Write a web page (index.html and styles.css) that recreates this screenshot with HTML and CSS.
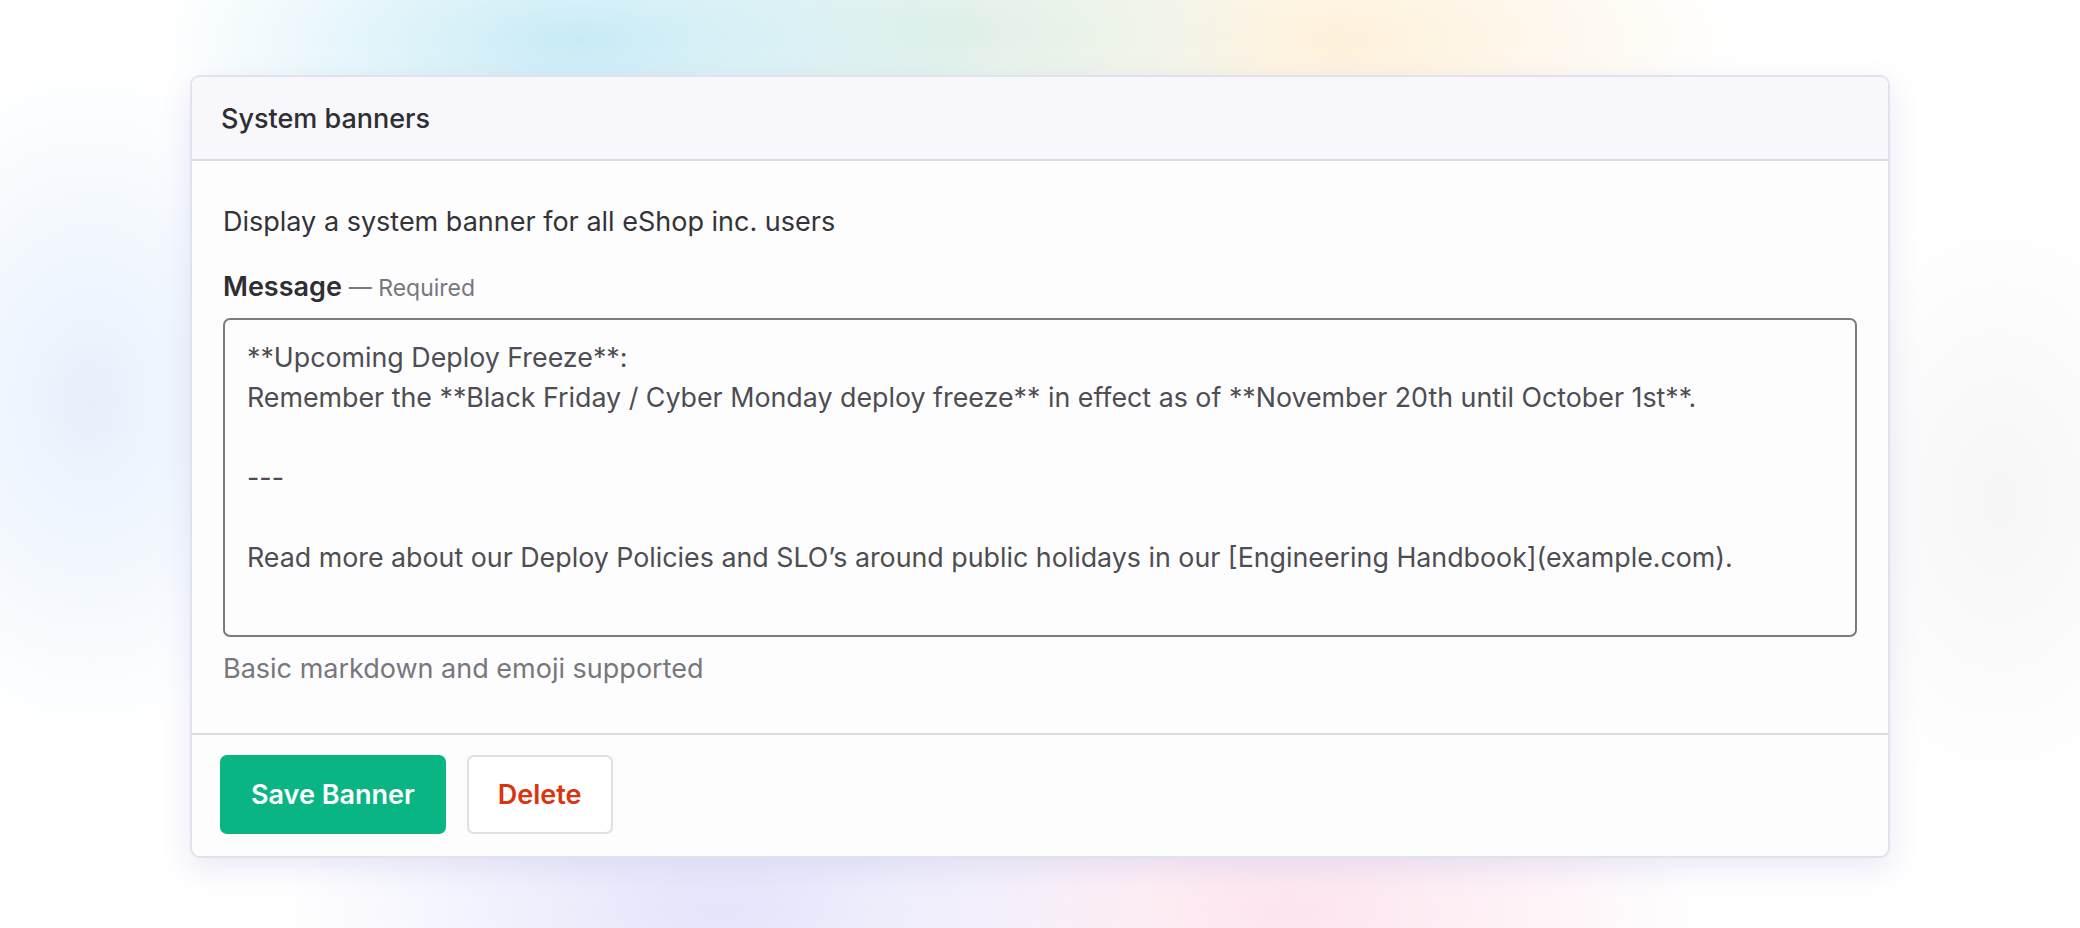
FILE: index.html
```html
<!DOCTYPE html>
<html lang="en">

<head>
  <meta charset="UTF-8">
  <meta name="viewport" content="width=device-width, initial-scale=1.0">
  <title>System banners</title>
  <link rel="stylesheet" href="styles.css">
</head>

<body>

  <div class="card">
    <div class="card-header">
      <h2>System banners</h2>
    </div>

    <div class="card-body">
      <p class="intro">Display a system banner for all eShop inc. users</p>

      <label for="mensaje">Message <span class="req">— Required</span></label>
      <textarea id="mensaje" rows="7">**Upcoming Deploy Freeze**:
Remember the **Black Friday / Cyber Monday deploy freeze** in effect as of **November 20th until October 1st**.

---

Read more about our Deploy Policies and SLO’s around public holidays in our [Engineering Handbook](example.com).</textarea>
      <p class="hint">Basic markdown and emoji supported</p>
    </div>

    <div class="card-footer">
      <button class="btn btn-save">Save Banner</button>
      <button class="btn btn-delete">Delete</button>
    </div>
  </div>

</body>

</html>
```

FILE: styles.css
```css
body {
  margin: 0;
  height: 928px;
  padding-top: 75px;
  box-sizing: border-box;
  font-family: Inter, "Noto Sans", sans-serif;
  color: #333338;
  background-color: #fff;
  background-image:
    radial-gradient(ellipse 420px 160px at 580px 40px, rgba(196, 234, 245, 0.95), transparent),
    radial-gradient(ellipse 340px 150px at 960px 30px, rgba(220, 238, 228, 0.9), transparent),
    radial-gradient(ellipse 400px 160px at 1340px 40px, rgba(254, 240, 216, 0.95), transparent),
    radial-gradient(ellipse 440px 160px at 720px 910px, rgba(226, 226, 251, 0.95), transparent),
    radial-gradient(ellipse 420px 160px at 1290px 910px, rgba(253, 226, 237, 0.95), transparent),
    radial-gradient(ellipse 240px 340px at 90px 400px, rgba(226, 238, 251, 0.85), transparent),
    radial-gradient(ellipse 200px 300px at 2000px 500px, rgba(244, 244, 246, 0.8), transparent);
}

.card {
  width: 1700px;
  margin: 0 auto;
  box-sizing: border-box;
  background: #fdfdfe;
  border: 2px solid #e2e2ec;
  border-radius: 10px;
  box-shadow: 0 10px 30px rgba(110, 110, 200, 0.16);
  overflow: hidden;
}

.card-header {
  height: 82px;
  display: flex;
  align-items: center;
  padding: 0 29px;
  background: #f8f8fc;
  border-bottom: 2px solid #dcdce4;
}

.card-header h2 {
  margin: 0;
  font-size: 27px;
  font-weight: 500;
  color: #2e2e33;
}

.card-body {
  padding: 43px 31px 46px;
}

.intro {
  margin: 0 0 29px;
  font-size: 27px;
  line-height: 36px;
}

label {
  display: block;
  font-size: 27px;
  line-height: 36px;
  font-weight: 600;
  color: #2e2e33;
  margin-bottom: 12px;
}

.req {
  font-size: 23px;
  font-weight: 400;
  color: #77777d;
}

textarea {
  display: block;
  width: 100%;
  box-sizing: border-box;
  padding: 17px 22px 18px;
  border: 2px solid #7c7c80;
  border-radius: 7px;
  background: #fdfdfe;
  font-family: inherit;
  font-size: 26.8px;
  line-height: 40px;
  color: #4d4d53;
  resize: none;
  overflow: hidden;
}

.hint {
  margin: 14px 0 0;
  font-size: 27px;
  line-height: 36px;
  color: #77777d;
}

.card-footer {
  display: flex;
  gap: 21px;
  padding: 20px 28px 22px;
  border-top: 2px solid #dcdce4;
}

.btn {
  height: 79px;
  padding: 0 31px;
  border-radius: 7px;
  font-family: inherit;
  font-size: 27px;
  font-weight: 600;
  cursor: pointer;
}

.btn-save {
  background: #0ab584;
  color: #fff;
  border: none;
}

.btn-delete {
  padding: 0 29px;
  background: #fff;
  color: #d9330f;
  border: 2px solid #dfdfe6;
}
```
